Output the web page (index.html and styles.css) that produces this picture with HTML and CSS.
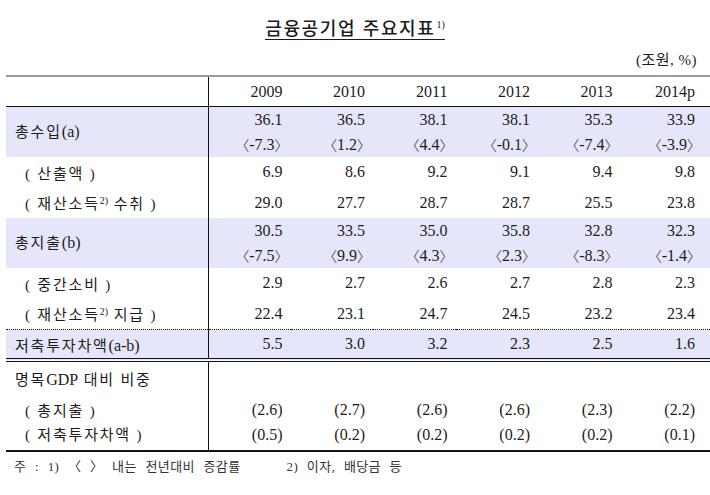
FILE: index.html
```html
<!DOCTYPE html>
<html lang="ko">
<head>
<meta charset="utf-8">
<title>금융공기업 주요지표</title>
<link rel="stylesheet" href="styles.css">
</head>
<body>
<div class="page">
  <div class="title"><span class="title-text">금융공기업 주요지표<sup class="title-sup">1)</sup></span></div>
  <div class="unit">(조원, %)</div>
  <table class="tbl">
    <colgroup>
      <col class="c-label"><col class="c-num"><col class="c-num"><col class="c-num"><col class="c-num"><col class="c-num"><col class="c-last">
    </colgroup>
    <thead>
      <tr class="head">
        <th class="lbl"></th><th>2009</th><th>2010</th><th>2011</th><th>2012</th><th>2013</th><th>2014p</th>
      </tr>
    </thead>
    <tbody>
      <tr class="hl two">
        <td class="lbl">총수입<span class="lat">(a)</span></td>
        <td><div>36.1</div><div><span class="bl">〈</span>-7.3<span class="br">〉</span></div></td>
        <td><div>36.5</div><div><span class="bl">〈</span>1.2<span class="br">〉</span></div></td>
        <td><div>38.1</div><div><span class="bl">〈</span>4.4<span class="br">〉</span></div></td>
        <td><div>38.1</div><div><span class="bl">〈</span>-0.1<span class="br">〉</span></div></td>
        <td><div>35.3</div><div><span class="bl">〈</span>-7.4<span class="br">〉</span></div></td>
        <td><div>33.9</div><div><span class="bl">〈</span>-3.9<span class="br">〉</span></div></td>
      </tr>
      <tr class="r30">
        <td class="lbl sub">( 산출액 )</td>
        <td>6.9</td><td>8.6</td><td>9.2</td><td>9.1</td><td>9.4</td><td>9.8</td>
      </tr>
      <tr class="r31">
        <td class="lbl sub">( 재산소득<sup class="fn">2)</sup> 수취 )</td>
        <td>29.0</td><td>27.7</td><td>28.7</td><td>28.7</td><td>25.5</td><td>23.8</td>
      </tr>
      <tr class="hl two">
        <td class="lbl">총지출<span class="lat">(b)</span></td>
        <td><div>30.5</div><div><span class="bl">〈</span>-7.5<span class="br">〉</span></div></td>
        <td><div>33.5</div><div><span class="bl">〈</span>9.9<span class="br">〉</span></div></td>
        <td><div>35.0</div><div><span class="bl">〈</span>4.3<span class="br">〉</span></div></td>
        <td><div>35.8</div><div><span class="bl">〈</span>2.3<span class="br">〉</span></div></td>
        <td><div>32.8</div><div><span class="bl">〈</span>-8.3<span class="br">〉</span></div></td>
        <td><div>32.3</div><div><span class="bl">〈</span>-1.4<span class="br">〉</span></div></td>
      </tr>
      <tr class="r30">
        <td class="lbl sub">( 중간소비 )</td>
        <td>2.9</td><td>2.7</td><td>2.6</td><td>2.7</td><td>2.8</td><td>2.3</td>
      </tr>
      <tr class="r31 dotted">
        <td class="lbl sub">( 재산소득<sup class="fn">2)</sup> 지급 )</td>
        <td>22.4</td><td>23.1</td><td>24.7</td><td>24.5</td><td>23.2</td><td>23.4</td>
      </tr>
      <tr class="hl saving">
        <td class="lbl">저축투자차액<span class="lat">(a-b)</span></td>
        <td>5.5</td><td>3.0</td><td>3.2</td><td>2.3</td><td>2.5</td><td>1.6</td>
      </tr>
      <tr class="gdp-head">
        <td class="lbl">명목<span class="lat">GDP</span> 대비 비중</td>
        <td></td><td></td><td></td><td></td><td></td><td></td>
      </tr>
      <tr class="gdp">
        <td class="lbl sub">( 총지출 )</td>
        <td>(2.6)</td><td>(2.7)</td><td>(2.6)</td><td>(2.6)</td><td>(2.3)</td><td>(2.2)</td>
      </tr>
      <tr class="gdp last">
        <td class="lbl sub">( 저축투자차액 )</td>
        <td>(0.5)</td><td>(0.2)</td><td>(0.2)</td><td>(0.2)</td><td>(0.2)</td><td>(0.1)</td>
      </tr>
    </tbody>
  </table>
  <div class="note"><span>주 : 1) 〈 〉 내는 전년대비 증감률</span><span class="note-2">2) 이자, 배당금 등</span></div>
</div>
</body>
</html>
```

FILE: styles.css
```css
html, body {
  margin: 0;
  padding: 0;
  background: #ffffff;
}

body {
  font-family: "Liberation Serif", "Noto Sans CJK KR", serif;
  color: #1c1c1c;
}

.page {
  width: 710px;
  height: 495px;
  overflow: hidden;
}

.title {
  padding-top: 17px;
  text-align: center;
  font-family: "Noto Sans CJK KR", sans-serif;
  font-size: 18px;
  font-weight: 500;
  letter-spacing: 1.6px;
  line-height: 21px;
  height: 24px;
}

.title-text {
  display: inline-block;
  line-height: 21px;
  padding-bottom: 1px;
  border-bottom: 1.5px solid #1c1c1c;
}

.title-sup {
  font-family: "Liberation Serif", serif;
  font-size: 10px;
  font-weight: normal;
  letter-spacing: 0;
  vertical-align: 7px;
  line-height: 0;
  margin-left: 1px;
}

.unit {
  margin-top: 9px;
  line-height: 20px;
  text-align: right;
  padding-right: 13px;
  font-size: 15px;
  letter-spacing: 0.5px;
}

.tbl {
  margin-top: 5px;
  margin-left: 6px;
  width: 704px;
  table-layout: fixed;
  border-collapse: collapse;
  border-top: 2px solid #9a9a9a;
  border-bottom: 2px solid #111;
  font-size: 16px;
}

.c-label { width: 202px; }
.c-num { width: 82.5px; }
.c-last { width: 89.5px; }

.tbl th,
.tbl td {
  padding: 0 8px 0 0;
  text-align: right;
  font-weight: normal;
  white-space: nowrap;
  vertical-align: middle;
}

.tbl th:last-child,
.tbl td:last-child {
  padding-right: 15px;
}

.tbl .lbl {
  text-align: left;
  padding-left: 9px;
  border-right: 1px solid #111;
  letter-spacing: 1.8px;
  font-size: 15px;
}

.tbl .lbl.sub {
  padding-left: 19px;
}

.lat {
  letter-spacing: 0;
  font-size: 16px;
}

.head th {
  height: 29px;
  border-bottom: 1px solid #111;
}

.hl td {
  background: #e6e6fa;
}

.two td {
  height: 50px;
  line-height: 25px;
}

.r30 td { height: 30px; }
.r31 td { height: 31px; }

.dotted td {
  border-bottom: 1px dotted #111;
}

.saving td {
  height: 28px;
  border-bottom: 4px double #111;
}

.gdp-head td {
  height: 33px;
}

.gdp td {
  height: 29px;
}

.gdp.last td {
  height: 26px;
  vertical-align: top;
  line-height: 22px;
}

.bl,
.br {
  font-family: "Noto Sans CJK KR", sans-serif;
  font-size: 14px;
  font-weight: 300;
}

.bl {
  margin-left: -6px;
}

.br {
  margin-right: -6px;
}

.fn {
  font-size: 10px;
  letter-spacing: 0;
  vertical-align: 5px;
  line-height: 0;
}

.note {
  margin-top: 5px;
  padding-left: 14px;
  line-height: 20px;
  font-size: 13px;
  color: #333;
  letter-spacing: 0.4px;
  word-spacing: 5px;
  white-space: nowrap;
}

.note-2 {
  margin-left: 46px;
}
```
